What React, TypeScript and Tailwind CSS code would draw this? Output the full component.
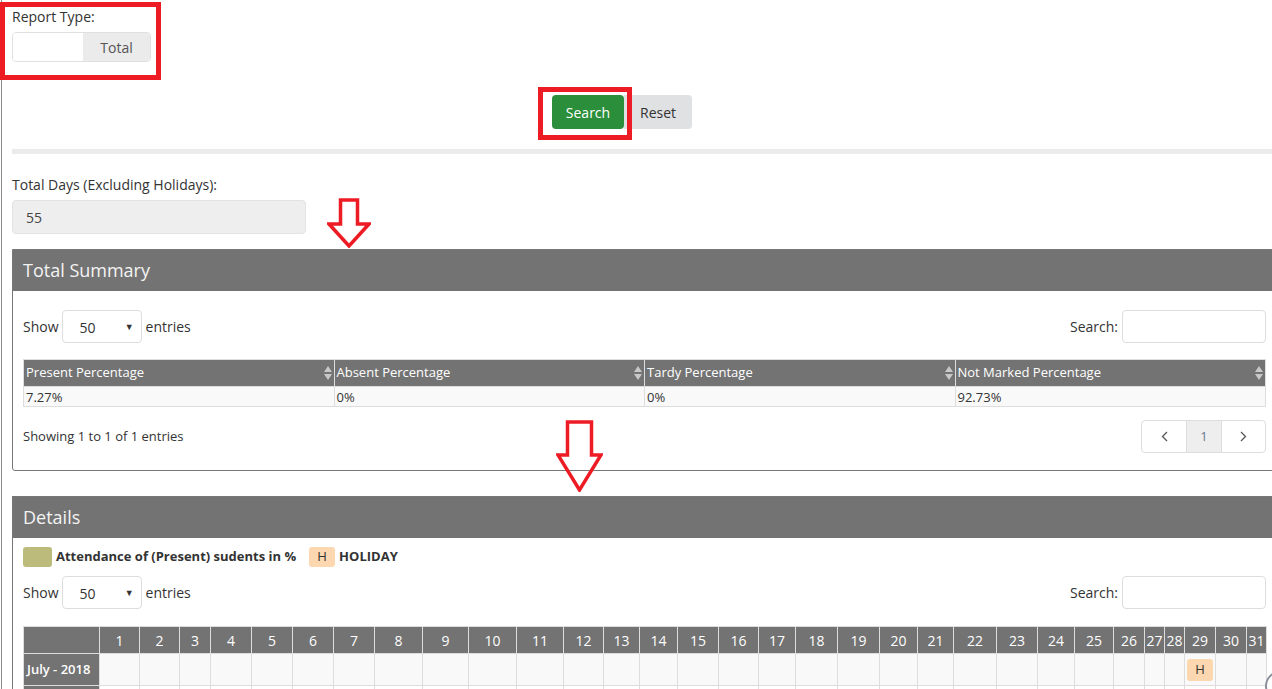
import React from 'react';

const dayWidths = [
  'w-[40px]', 'w-[40px]', 'w-[31px]', 'w-[41px]', 'w-[41px]', 'w-[41px]', 'w-[41px]', 'w-[48px]',
  'w-[46px]', 'w-[48px]', 'w-[47px]', 'w-[40px]', 'w-[36px]', 'w-[38px]', 'w-[41px]', 'w-[40px]',
  'w-[37px]', 'w-[42px]', 'w-[42px]', 'w-[38px]', 'w-[36px]', 'w-[43px]', 'w-[41px]', 'w-[37px]',
  'w-[39px]', 'w-[31px]', 'w-[20px]', 'w-[20px]', 'w-[31px]', 'w-[31px]', 'w-[20px]',
];

function SortIcon() {
  return (
    <svg width="8" height="14" viewBox="0 0 8 14" className="shrink-0">
      <path d="M4 0 L8 6 L0 6 Z" fill="#c8c8c8" />
      <path d="M4 14 L8 8 L0 8 Z" fill="#c8c8c8" />
    </svg>
  );
}

function Chevron({ dir }: { dir: 'left' | 'right' }) {
  return (
    <svg width="7" height="11" viewBox="0 0 7 11">
      <path
        d={dir === 'left' ? 'M6 1 L1.5 5.5 L6 10' : 'M1 1 L5.5 5.5 L1 10'}
        fill="none"
        stroke="#555"
        strokeWidth={1.3}
      />
    </svg>
  );
}

function ShowEntries() {
  return (
    <div className="flex items-center justify-between h-[33px]">
      <div className="flex items-center text-[14px] text-[#333]">
        <span>Show</span>
        <div className="ml-[3px] w-[80px] h-[33px] border border-[#ddd] rounded-[4px] flex items-center justify-between pl-[17px] pr-[7px]">
          <span className="pt-[2px]">50</span>
          <span className="text-[9px] text-[#333]">▼</span>
        </div>
        <span className="ml-[4px]">entries</span>
      </div>
      <div className="flex items-center text-[14px] text-[#333]">
        <span>Search:</span>
        <div className="ml-[4px] w-[144px] h-[33px] border border-[#ddd] rounded-[4px]" />
      </div>
    </div>
  );
}

function RedArrow({ className, w, h, shaft, headY }: { className: string; w: number; h: number; shaft: number; headY: number }) {
  const l = (w - shaft) / 2;
  const r = l + shaft;
  return (
    <svg width={w} height={h} viewBox={`0 0 ${w} ${h}`} className={className}>
      <path
        d={`M${l} 2 L${r} 2 L${r} ${headY} L${w - 2} ${headY} L${w / 2} ${h - 2} L2 ${headY} L${l} ${headY} Z`}
        fill="none"
        stroke="#ed1c24"
        strokeWidth={3.5}
        strokeLinejoin="miter"
      />
    </svg>
  );
}

export default function App() {
  const summaryCols = ['Present Percentage', 'Absent Percentage', 'Tardy Percentage', 'Not Marked Percentage'];
  const summaryVals = ['7.27%', '0%', '0%', '92.73%'];
  const days = Array.from({ length: 31 }, (_, i) => i + 1);

  return (
    <div className="relative w-[1272px] h-[689px] overflow-hidden bg-white font-['Open_Sans',sans-serif] text-[#333]">
      <div className="ml-[1px] h-full border-l border-[#8a8a8a] pl-[10px]">
        <div className="w-[1265px]">
          {/* Report type */}
          <div className="pt-[7px] h-[27px] text-[14px] leading-[20px]">Report Type:</div>
          <div className="mt-[5px] flex w-[139px] h-[30px] border border-[#e0e0e0] rounded-[4px] overflow-hidden">
            <div className="w-[70px] bg-white" />
            <div className="flex-1 bg-[#ebebeb] flex items-center justify-center text-[14px] text-[#555]">Total</div>
          </div>

          {/* Buttons */}
          <div className="mt-[33px] ml-[540px] flex h-[34px]">
            <button className="w-[72px] h-[34px] bg-[#2b8e3b] text-white text-[14px] rounded-[4px]">Search</button>
            <button className="w-[68px] h-[34px] bg-[#e0e1e3] text-[#333] text-[14px] rounded-r-[4px]">Reset</button>
          </div>

          <div className="mt-[20px] h-[5px] bg-[#ebebeb]" />

          {/* Total days */}
          <div className="mt-[21px] h-[20px] text-[14px] leading-[20px]">Total Days (Excluding Holidays):</div>
          <div className="mt-[5px] w-[294px] h-[34px] bg-[#eeeeee] border border-[#e3e3e3] rounded-[4px] flex items-center pl-[13px] text-[14px] text-[#444]">
            55
          </div>

          {/* Total Summary panel */}
          <div className="mt-[15px] border border-[#777] rounded-b-[3px]">
            <div className="h-[41px] bg-[#737373] flex items-center pl-[10px] text-[18px] text-[#f3f3f3]">Total Summary</div>
            <div className="px-[10px] pt-[19px] pb-[17px]">
              <ShowEntries />
              <table className="mt-[16px] w-full table-fixed border-collapse text-[13px]">
                <thead>
                  <tr className="bg-[#737373] text-white h-[27px]">
                    {summaryCols.map((c) => (
                      <th key={c} className="border border-[#ddd] font-normal text-left px-[2px] py-0">
                        <div className="flex items-center justify-between">
                          <span>{c}</span>
                          <SortIcon />
                        </div>
                      </th>
                    ))}
                  </tr>
                </thead>
                <tbody>
                  <tr className="bg-[#f9f9f9] h-[20px]">
                    {summaryVals.map((v, i) => (
                      <td key={i} className="border border-[#ddd] px-[2px] py-0 leading-[18px]">{v}</td>
                    ))}
                  </tr>
                </tbody>
              </table>
              <div className="mt-[13px] flex items-center justify-between h-[33px]">
                <span className="text-[13px]">Showing 1 to 1 of 1 entries</span>
                <div className="flex h-[33px] text-[14px] text-[#555]">
                  <div className="w-[46px] border border-[#ddd] rounded-l-[4px] flex items-center justify-center">
                    <Chevron dir="left" />
                  </div>
                  <div className="w-[34px] border-y border-[#ddd] bg-[#eeeeee] flex items-center justify-center text-[13px] text-[#6a7a8c]">1</div>
                  <div className="w-[45px] border border-[#ddd] rounded-r-[4px] flex items-center justify-center">
                    <Chevron dir="right" />
                  </div>
                </div>
              </div>
            </div>
          </div>

          {/* Details panel */}
          <div className="mt-[25px] border border-[#777]">
            <div className="h-[41px] bg-[#737373] flex items-center pl-[10px] text-[18px] text-[#f3f3f3]">Details</div>
            <div className="px-[10px] pt-[9px]">
              <div className="flex items-center h-[20px] text-[13px] font-bold">
                <div className="w-[29px] h-[20px] rounded-[3px] bg-[#bdbb7b]" />
                <span className="ml-[4px]">Attendance of (Present) sudents in %</span>
                <div className="ml-[13px] w-[26px] h-[20px] rounded-[3px] bg-[#fdd7b0] flex items-center justify-center font-normal">H</div>
                <span className="ml-[4px]">HOLIDAY</span>
              </div>
              <div className="mt-[9px]">
                <ShowEntries />
              </div>
              <table className="mt-[17px] w-[1243px] table-fixed border-collapse text-[14px]">
                <colgroup>
                  <col className="w-[76px]" />
                  {dayWidths.map((w, i) => (
                    <col key={i} className={w} />
                  ))}
                </colgroup>
                <thead>
                  <tr className="bg-[#737373] text-white h-[27px]">
                    <th className="border border-[#ddd] p-0" />
                    {days.map((d) => (
                      <th key={d} className="border border-[#ddd] p-0 font-normal text-center">{d}</th>
                    ))}
                  </tr>
                </thead>
                <tbody>
                  <tr className="h-[32px] bg-[#f9f9f9]">
                    <td className="border border-[#ddd] bg-[#737373] text-white text-[13px] font-semibold px-[3px] whitespace-nowrap">July - 2018</td>
                    {days.map((d) => (
                      <td key={d} className="border border-[#ddd] p-0 text-center">
                        {d === 29 && (
                          <div className="mx-auto w-[26px] h-[22px] rounded-[3px] bg-[#fdd7b0] flex items-center justify-center text-[13px]">H</div>
                        )}
                      </td>
                    ))}
                  </tr>
                  <tr className="h-[32px] bg-white">
                    <td className="border border-[#ddd] bg-[#737373]" />
                    {days.map((d) => (
                      <td key={d} className="border border-[#ddd]" />
                    ))}
                  </tr>
                </tbody>
              </table>
            </div>
          </div>
        </div>
      </div>

      {/* annotations */}
      <div className="absolute left-0 top-[2px] w-[161px] h-[78px] border-[5px] border-[#ed1c24]" />
      <div className="absolute left-[538px] top-[87px] w-[94px] h-[53px] border-[5px] border-[#ed1c24]" />
      <RedArrow className="absolute left-[327px] top-[198px]" w={44} h={50} shaft={17} headY={26} />
      <RedArrow className="absolute left-[556px] top-[420px]" w={47} h={72} shaft={24} headY={35} />
      <div className="absolute left-[1265px] top-[671px] w-[30px] h-[30px] rounded-full border-2 border-[#8a9099] bg-white" />
    </div>
  );
}
